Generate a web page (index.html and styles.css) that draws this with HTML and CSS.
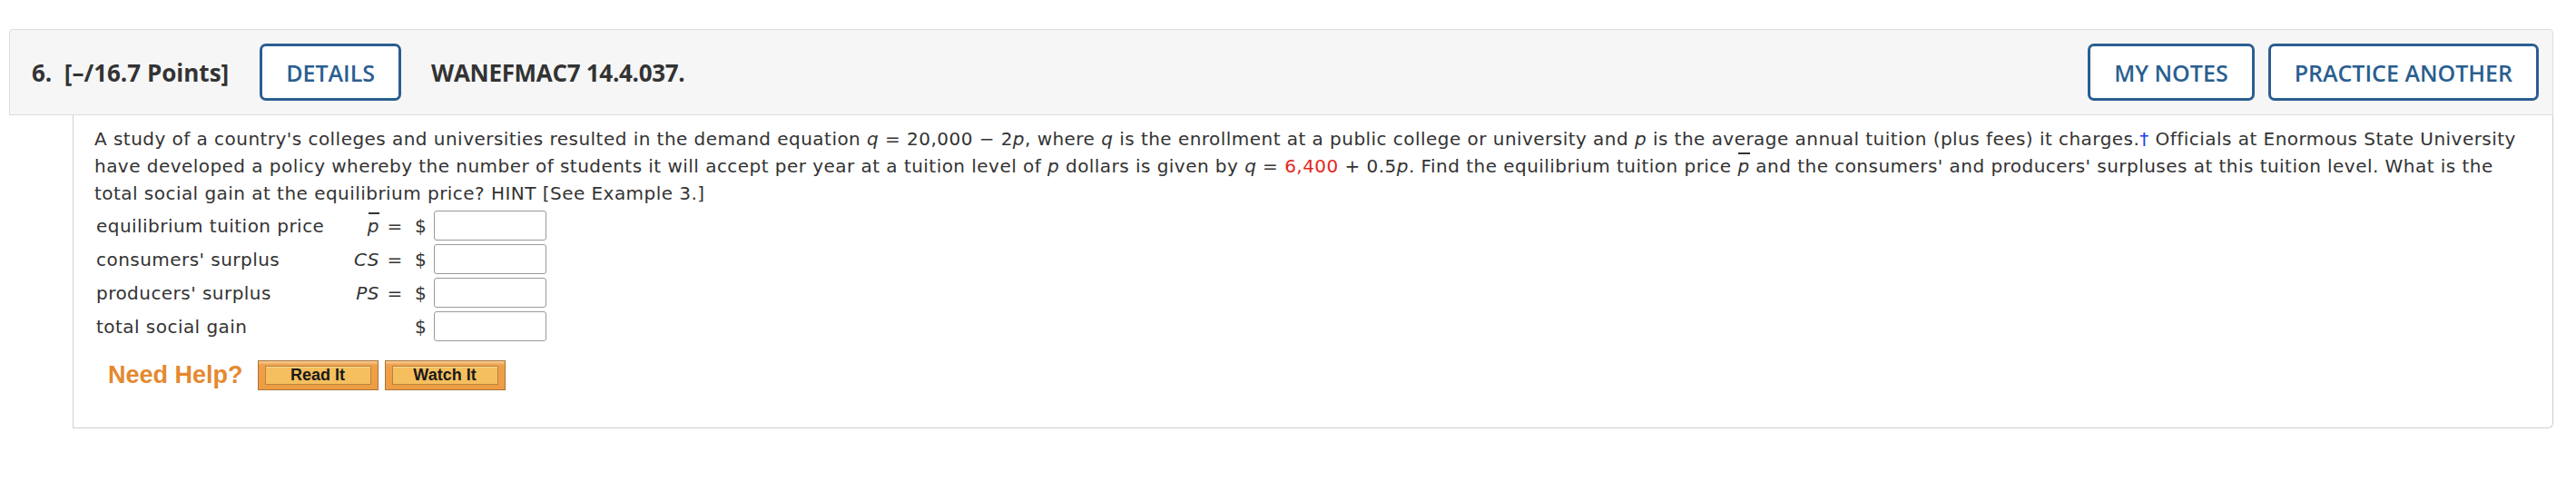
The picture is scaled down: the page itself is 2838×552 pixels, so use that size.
FILE: index.html
```html
<!DOCTYPE html>
<html>
<head>
<meta charset="utf-8">
<link rel="stylesheet" href="styles.css">
</head>
<body>
<div class="question">
  <div class="qhead">
    <span class="qnum">6.&nbsp; [–/16.7 Points]</span>
    <button class="btn">DETAILS</button>
    <span class="qid">WANEFMAC7 14.4.037.</span>
    <div class="spacer"></div>
    <button class="btn">MY NOTES</button>
    <button class="btn">PRACTICE ANOTHER</button>
  </div>
  <div class="qbody">
    <p class="prob">A study of a country's colleges and universities resulted in the demand equation <i>q</i> = 20,000 − 2<i>p</i>, where <i>q</i> is the enrollment at a public college or university and <i>p</i> is the average annual tuition (plus fees) it charges.<span class="dagger">†</span> Officials at Enormous State University have developed a policy whereby the number of students it will accept per year at a tuition level of <i>p</i> dollars is given by <i>q</i> = <span class="red">6,400</span> + 0.5<i>p</i>. Find the equilibrium tuition price <i class="pbar">p</i> and the consumers' and producers' surpluses at this tuition level. What is the total social gain at the equilibrium price? HINT [See Example 3.]</p>
    <div class="answers">
      <span class="lbl">equilibrium tuition price</span><span class="var"><i class="pbar">p</i></span><span class="eq">=</span><span class="dol">$</span><span class="box"></span>
      <span class="lbl">consumers' surplus</span><span class="var"><i>CS</i></span><span class="eq">=</span><span class="dol">$</span><span class="box"></span>
      <span class="lbl">producers' surplus</span><span class="var"><i>PS</i></span><span class="eq">=</span><span class="dol">$</span><span class="box"></span>
      <span class="lbl">total social gain</span><span class="var"></span><span class="eq"></span><span class="dol">$</span><span class="box"></span>
    </div>
    <div class="help">
      <span class="needhelp">Need Help?</span>
      <span class="hbtn"><span class="hin">Read It</span></span>
      <span class="hbtn"><span class="hin">Watch It</span></span>
    </div>
  </div>
</div>
</body>
</html>
```
FILE: styles.css
```css
html, body {
  margin: 0;
  padding: 0;
  background: #fff;
}
.question {
  margin: 32px 0 0 10px;
  width: 2803px;
}
.qhead {
  box-sizing: border-box;
  height: 95px;
  background: #f6f6f6;
  border: 1px solid #dcdcdc;
  border-radius: 4px 4px 0 0;
  display: flex;
  align-items: center;
  padding: 0 15px 0 24px;
  font-family: "Open Sans", sans-serif;
  color: #333;
}
.qnum {
  font-size: 26px;
  font-weight: 700;
  white-space: pre;
}
.qid {
  font-size: 26px;
  font-weight: 700;
  letter-spacing: -0.3px;
}
.spacer {
  flex: 1;
}
.btn {
  box-sizing: border-box;
  height: 63px;
  margin: 0 0 0 15px;
  padding: 0 26px;
  background: #fff;
  border: 3px solid #2a5e90;
  border-radius: 7px;
  color: #2a5e90;
  font-family: "Open Sans", sans-serif;
  font-size: 25px;
  font-weight: 600;
}
.qnum + .btn {
  margin: 0 33px 0 34px;
}
.qbody {
  box-sizing: border-box;
  margin-left: 70px;
  border: 1px solid #cfcfcf;
  border-top: none;
  border-radius: 0 0 6px 0;
  padding: 11px 24px 41px 23px;
  font-family: "DejaVu Sans", Verdana, sans-serif;
  font-size: 20px;
  letter-spacing: 0.46px;
  color: #333;
}
.prob {
  margin: 0;
  line-height: 30px;
}
.dagger {
  color: #1f3cf0;
}
.red {
  color: #e5281c;
}
.pbar {
  position: relative;
  display: inline-block;
  line-height: 1;
}
.pbar::before {
  content: "";
  position: absolute;
  left: 1px;
  right: 0;
  top: -5px;
  height: 2px;
  background: #333;
}
.answers {
  margin-top: 4px;
  display: grid;
  grid-template-columns: 262px 52px 34px 26px 124px;
  grid-auto-rows: 33px;
  row-gap: 4px;
  align-items: center;
}
.lbl {
  padding-left: 2px;
}
.var {
  text-align: right;
}
.eq {
  text-align: center;
}
.dol {
  padding-left: 5px;
}
.box {
  box-sizing: border-box;
  height: 33px;
  border: 1px solid #9a9a9a;
  border-radius: 3px;
  background: #fff;
}
.help {
  margin-top: 21px;
  display: flex;
  align-items: center;
  padding-left: 15px;
  letter-spacing: 0;
}
.needhelp {
  font-family: "Liberation Sans", Arial, sans-serif;
  font-weight: 700;
  font-size: 27px;
  color: #e4892f;
  margin-right: 16px;
}
.hbtn {
  box-sizing: border-box;
  width: 133px;
  height: 33px;
  margin-right: 7px;
  padding: 5px 7px;
  background: linear-gradient(#f8d0a0 0, #f0a04a 4px, #ee9c42 100%);
  border: 1px solid #a87438;
  display: flex;
}
.hin {
  flex: 1;
  background: #f5bf5e;
  border: 1px solid #b9843f;
  box-shadow: inset 0 1px 0 #f8d890;
  display: flex;
  align-items: center;
  justify-content: center;
  font-family: "Liberation Sans", Arial, sans-serif;
  font-weight: 700;
  font-size: 18px;
  color: #1a1a1a;
}
```
